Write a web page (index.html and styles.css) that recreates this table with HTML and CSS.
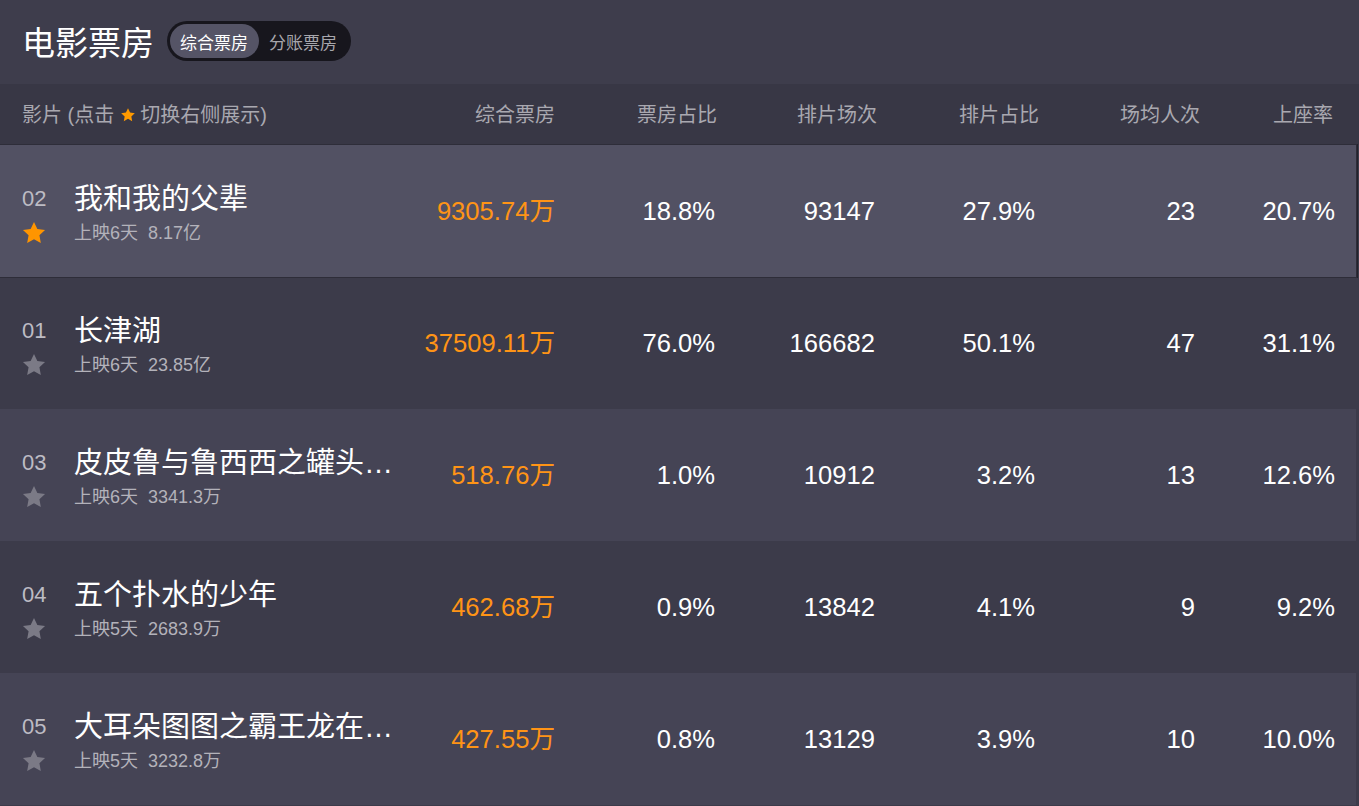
FILE: index.html
```html
<!DOCTYPE html>
<html lang="zh-CN">
<head>
<meta charset="utf-8">
<title>电影票房</title>
<link rel="stylesheet" href="styles.css">
</head>
<body>
<div class="page">
  <header class="top">
    <h1 class="title">电影票房</h1>
    <div class="toggle">
      <span class="toggle-item active">综合票房</span>
      <span class="toggle-item">分账票房</span>
    </div>
  </header>

  <div class="thead">
    <div class="th th-name">影片 (点击 <svg class="mini-star" viewBox="0 0 24 24"><path d="M12 1.8l3.1 6.5 7.1.9-5.2 4.9 1.3 7.1L12 17.8l-6.3 3.4 1.3-7.1L1.8 9.2l7.1-.9z"/></svg> 切换右侧展示)</div>
    <div class="th">综合票房</div>
    <div class="th">票房占比</div>
    <div class="th">排片场次</div>
    <div class="th">排片占比</div>
    <div class="th">场均人次</div>
    <div class="th">上座率</div>
  </div>

  <div class="rows">
    <div class="row row-hl">
      <div class="name-cell">
        <span class="rank">02</span>
        <span class="movie">我和我的父辈</span>
        <svg class="star on" viewBox="0 0 24 24"><path d="M12 1.8l3.1 6.5 7.1.9-5.2 4.9 1.3 7.1L12 17.8l-6.3 3.4 1.3-7.1L1.8 9.2l7.1-.9z"/></svg>
        <span class="sub">上映6天<span class="total">8.17亿</span></span>
      </div>
      <div class="td box">9305.74万</div>
      <div class="td">18.8%</div>
      <div class="td">93147</div>
      <div class="td">27.9%</div>
      <div class="td">23</div>
      <div class="td">20.7%</div>
    </div>

    <div class="row row-a">
      <div class="name-cell">
        <span class="rank">01</span>
        <span class="movie">长津湖</span>
        <svg class="star" viewBox="0 0 24 24"><path d="M12 1.8l3.1 6.5 7.1.9-5.2 4.9 1.3 7.1L12 17.8l-6.3 3.4 1.3-7.1L1.8 9.2l7.1-.9z"/></svg>
        <span class="sub">上映6天<span class="total">23.85亿</span></span>
      </div>
      <div class="td box">37509.11万</div>
      <div class="td">76.0%</div>
      <div class="td">166682</div>
      <div class="td">50.1%</div>
      <div class="td">47</div>
      <div class="td">31.1%</div>
    </div>

    <div class="row row-b">
      <div class="name-cell">
        <span class="rank">03</span>
        <span class="movie">皮皮鲁与鲁西西之罐头小人</span>
        <svg class="star" viewBox="0 0 24 24"><path d="M12 1.8l3.1 6.5 7.1.9-5.2 4.9 1.3 7.1L12 17.8l-6.3 3.4 1.3-7.1L1.8 9.2l7.1-.9z"/></svg>
        <span class="sub">上映6天<span class="total">3341.3万</span></span>
      </div>
      <div class="td box">518.76万</div>
      <div class="td">1.0%</div>
      <div class="td">10912</div>
      <div class="td">3.2%</div>
      <div class="td">13</div>
      <div class="td">12.6%</div>
    </div>

    <div class="row row-a">
      <div class="name-cell">
        <span class="rank">04</span>
        <span class="movie">五个扑水的少年</span>
        <svg class="star" viewBox="0 0 24 24"><path d="M12 1.8l3.1 6.5 7.1.9-5.2 4.9 1.3 7.1L12 17.8l-6.3 3.4 1.3-7.1L1.8 9.2l7.1-.9z"/></svg>
        <span class="sub">上映5天<span class="total">2683.9万</span></span>
      </div>
      <div class="td box">462.68万</div>
      <div class="td">0.9%</div>
      <div class="td">13842</div>
      <div class="td">4.1%</div>
      <div class="td">9</div>
      <div class="td">9.2%</div>
    </div>

    <div class="row row-b">
      <div class="name-cell">
        <span class="rank">05</span>
        <span class="movie">大耳朵图图之霸王龙在行动</span>
        <svg class="star" viewBox="0 0 24 24"><path d="M12 1.8l3.1 6.5 7.1.9-5.2 4.9 1.3 7.1L12 17.8l-6.3 3.4 1.3-7.1L1.8 9.2l7.1-.9z"/></svg>
        <span class="sub">上映5天<span class="total">3232.8万</span></span>
      </div>
      <div class="td box">427.55万</div>
      <div class="td">0.8%</div>
      <div class="td">13129</div>
      <div class="td">3.9%</div>
      <div class="td">10</div>
      <div class="td">10.0%</div>
    </div>
  </div>
</div>
</body>
</html>
```

FILE: styles.css
```css
* { box-sizing: border-box; }

html, body {
  margin: 0;
  padding: 0;
  background: #3c3b4a;
  height: 806px;
  overflow: hidden;
}

body {
  font-family: "Liberation Sans", "Noto Sans CJK SC", sans-serif;
  color: #fff;
}

.page {
  width: 1359px;
}

.top {
  height: 84px;
  background: #3e3d4c;
  display: flex;
  align-items: center;
  padding-left: 22px;
  padding-bottom: 2px;
}

.title {
  margin: 0;
  font-family: "Noto Sans CJK SC", sans-serif;
  font-weight: 400;
  font-size: 33px;
  line-height: 40px;
  color: #fff;
}

.toggle {
  margin-left: 13px;
  display: flex;
  align-items: center;
  height: 40px;
  padding: 3px;
  border-radius: 20px;
  background: #17161d;
}

.toggle-item {
  display: flex;
  align-items: center;
  height: 34px;
  padding: 0 11px 0 10px;
  border-radius: 17px;
  font-family: "Noto Sans CJK SC", sans-serif;
  font-size: 17px;
  color: #a7a6ac;
}

.toggle-item.active {
  background: #555466;
  color: #fff;
}

.toggle-item + .toggle-item {
  padding: 0 11px 0 10px;
}

.thead {
  height: 61px;
  background: #383745;
  display: grid;
  grid-template-columns: 373px 160px 162px 160px 162px 161px 133px;
  padding-left: 22px;
  align-items: center;
}

.th {
  font-size: 20px;
  line-height: 24px;
  color: #a9a8b0;
  text-align: right;
  white-space: nowrap;
}

.th-name {
  text-align: left;
  display: flex;
  align-items: center;
}

.mini-star {
  width: 16px;
  height: 16px;
  fill: #ff9a00;
  margin: 0 4px 0 6px;
}

.rows {
  width: 1356px;
}

.row {
  height: 132px;
  display: grid;
  grid-template-columns: 373px 160px 160px 160px 160px 160px 140px;
  padding-left: 22px;
  align-items: center;
}

.row-hl {
  background: #525163;
  box-shadow: 0 0 0 1px #2e2d39, 1px 0 0 1px #24232c;
  position: relative;
}

.row-a { background: #3c3b4a; }
.row-b { background: #454455; }

.name-cell {
  display: grid;
  grid-template-columns: 52px 324px;
  grid-template-rows: 34px 22px;
  row-gap: 6px;
  align-items: center;
  padding-top: 4px;
}

.rank {
  font-size: 22px;
  line-height: 34px;
  color: #bdbcc4;
}

.movie {
  font-family: "Liberation Sans", "Noto Sans CJK SC", sans-serif;
  font-size: 29px;
  line-height: 34px;
  color: #fff;
  white-space: nowrap;
  overflow: hidden;
  text-overflow: ellipsis;
}

.star {
  width: 26px;
  height: 26px;
  margin-left: -1px;
  fill: #7b7a86;
}

.star.on { fill: #ff9500; }

.sub {
  font-size: 18px;
  line-height: 22px;
  color: #b3b2ba;
  white-space: nowrap;
}

.total {
  margin-left: 10px;
}

.td {
  text-align: right;
  font-size: 25.6px;
  line-height: 30px;
  color: #fff;
  white-space: nowrap;
}

.td.box {
  color: #ff9416;
}
```
